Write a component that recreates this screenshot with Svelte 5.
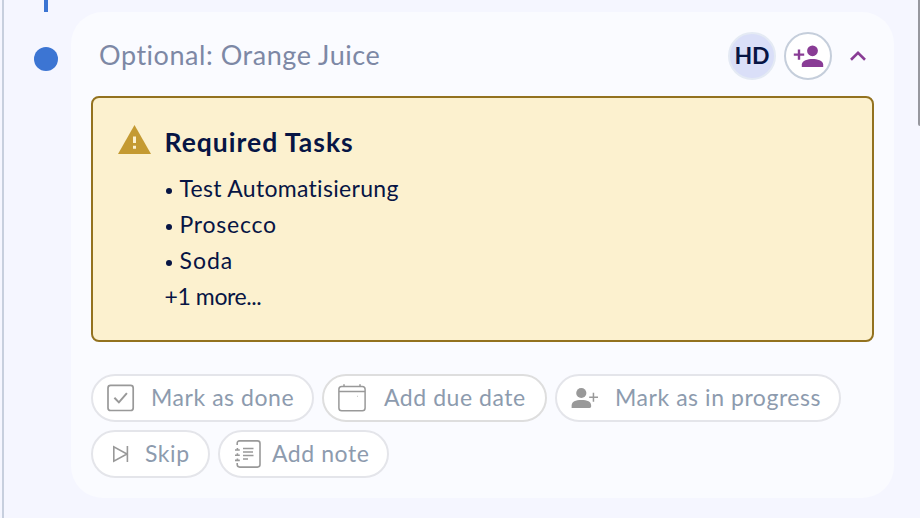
<script>
  const tasks = [
    { label: 'Test Automatisierung', cls: 'task-a' },
    { label: 'Prosecco', cls: 'task-b' },
    { label: 'Soda', cls: 'task-c' }
  ];
</script>

<main class="page">
  <div class="edge"></div>
  <aside class="timeline">
    <div class="stem"></div>
    <div class="dot"></div>
  </aside>

  <section class="card">
    <header class="head">
      <h2><span class="title">Optional: Orange Juice</span></h2>
      <div class="avatar"><span>HD</span></div>
      <button class="assign" aria-label="Assign">
        <svg width="44" height="44" viewBox="0 0 44 44" fill="#893c95">
          <circle cx="26.5" cy="16.8" r="5.4" />
          <path d="M15.8 33v-2.500c0-3.600 6.200-5.400 10.700-5.400s10.700 1.800 10.700 5.400V33z" />
          <path d="M11.800 15.400h2.400v4h4v2.400h-4v4h-2.400v-4h-4v-2.400h4z" />
        </svg>
      </button>
      <button class="toggle" aria-label="Collapse">
        <svg width="16" height="10" viewBox="0 0 16 10" fill="none" stroke="#893c95" stroke-width="2.600">
          <path d="M1 8.800l7-6.900 7 6.900" />
        </svg>
      </button>
    </header>

    <div class="alert">
      <svg class="warn" width="33" height="29" viewBox="0 0 33 29">
        <path d="M16.500 0L33 29H0z" fill="#c49a32" />
        <path d="M15 11.600h3v6.400h-3zM15 20.800h3v3h-3z" fill="#fcf1cf" />
      </svg>
      <div class="alert-body">
        <h3><span class="required">Required Tasks</span></h3>
        <ul>
          {#each tasks as task}
            <li><i class="bullet"></i><span class={task.cls}>{task.label}</span></li>
          {/each}
          <li><span class="more">+1 more...</span></li>
        </ul>
      </div>
    </div>

    <div class="actions">
      <button class="pill done">
        <svg width="28" height="28" viewBox="0 0 28 28" fill="none" stroke="#999" stroke-width="1.700">
          <rect x="1" y="1.300" width="25.200" height="25.200" rx="2.600" />
          <path d="M7.400 13.800l4.500 4.600 8-9.200" stroke-width="2" />
        </svg>
        <span>Mark as done</span>
      </button>
      <button class="pill due">
        <svg width="28" height="28" viewBox="0 0 28 28" fill="none" stroke="#999" stroke-width="1.500">
          <rect x="0.900" y="2.400" width="26.200" height="24.400" rx="2.800" />
          <path d="M1 7.600h26M6 .2v2.200M22 .2v2.200" />
          <path d="M19 12.300h1" stroke-width="1" opacity=".6" />
        </svg>
        <span>Add due date</span>
      </button>
      <button class="pill progress">
        <svg width="28" height="28" viewBox="0 0 28 28" fill="#999">
          <circle cx="10.300" cy="9" r="5.100" />
          <path d="M.6 24v-2c0-4.600 4-6 9.800-6s9.800 1.400 9.800 6c0 1.300-.6 2-1.700 2z" />
          <path d="M21.700 8.800h1.500v3.700H27V14h-3.800v3.700h-1.500V14h-3.500v-1.500h3.500z" />
        </svg>
        <span>Mark as in progress</span>
      </button>
      <button class="pill skip">
        <svg width="28" height="28" viewBox="0 0 28 28" fill="none" stroke="#999" stroke-width="1.600">
          <path d="M6.800 6.800v14.400l13.200-7.200zM20.400 6v16" />
        </svg>
        <span>Skip</span>
      </button>
      <button class="pill note">
        <svg width="28" height="28" viewBox="0 0 28 28" fill="none" stroke="#999" stroke-width="1.600">
          <path d="M3.200 5V3.400C3.200 1.700 4 .9 5.700.9h17.800c1.700 0 2.500.8 2.500 2.500v21.200c0 1.700-.8 2.500-2.500 2.500H5.700c-1.700 0-2.500-.8-2.500-2.500V23" />
          <path d="M1 10h4.800M1 15.200h4.800M1 20.400h4.800M3.400 8v2M3.400 13.200v2M3.400 18.400v2" />
          <path d="M9 8.500h10.500M9 12h10M9 15.500h10.500M9 19h5" />
        </svg>
        <span>Add note</span>
      </button>
    </div>
  </section>

  <div class="scroll"></div>
</main>

<style>
  :global(body) { margin: 0; background: #f5f6ff; }
  .page {
    display: flex;
    box-sizing: border-box;
    width: 920px;
    height: 518px;
    padding-left: 2px;
    overflow: hidden;
    background: #f5f6ff;
    font-family: Lato, "Liberation Sans", sans-serif;
    font-variant-ligatures: none;
    color: #071544;
  }
  button { font-family: inherit; margin: 0; padding: 0; background: none; border: 0; }
  h2, h3, ul { margin: 0; padding: 0; font-weight: 400; list-style: none; }
  svg { display: block; flex: none; }
  span { white-space: nowrap; }

  .edge { width: 2px; background: #c7cfde; }
  .timeline { display: flex; flex-direction: column; align-items: center; width: 67px; }
  .stem { width: 4px; height: 12px; margin-left: 17px; background: #3c75d3; }
  .dot { width: 24px; height: 24px; margin: 35px 0 0 17px; border-radius: 50%; background: #3c75d3; }

  .card {
    box-sizing: border-box;
    width: 823px;
    height: 486px;
    margin-top: 12px;
    padding: 20px;
    border-radius: 32px;
    background: #fafbff;
  }
  .head { display: flex; align-items: center; height: 48px; padding: 0 8px; }
  h2 { flex: 1; font-size: 27px; line-height: 46px; height: 48px; letter-spacing: 0.54px; color: #7d88a5; }
  .avatar, .assign {
    display: flex;
    align-items: center;
    justify-content: center;
    box-sizing: border-box;
    width: 48px;
    height: 48px;
    margin-right: 8px;
    border: 2px solid #e4eaf4;
    border-radius: 50%;
    background: #dadff8;
    font-size: 23px;
    font-weight: 700;
  }
  .avatar span { padding-bottom: 2px; }
  .assign { border-color: #c5cedb; background: #fff; }
  .toggle { margin-left: 10px; }

  .alert {
    display: flex;
    box-sizing: border-box;
    height: 246px;
    margin-top: 16px;
    padding: 26px 25px;
    border: 2px solid #93721f;
    border-radius: 8px;
    background: #fcf1cf;
  }
  .warn { margin-top: 1px; }
  .alert-body { margin-left: 13.500px; }
  h3 { font-size: 26.500px; line-height: 36px; font-weight: 700; letter-spacing: 1px; }
  ul { margin-top: 11px; font-size: 23px; }
  li { display: flex; align-items: center; height: 36px; }
  li span { padding-bottom: 2px; }
  .task-a { letter-spacing: 0.300px; }
  .task-b { letter-spacing: 0.750px; }
  .task-c { letter-spacing: 1px; }
  .more { letter-spacing: -0.400px; }
  .bullet { width: 6px; height: 6px; margin: 3px 8px 0 1px; border-radius: 50%; background: #071544; }

  .actions { display: flex; flex-wrap: wrap; gap: 8px; margin-top: 32px; }
  .pill {
    display: flex;
    align-items: center;
    box-sizing: border-box;
    height: 48px;
    padding-left: 14px;
    border: 2px solid #e4e5ea;
    border-radius: 24px;
    background: #fff;
    color: #8d9bae;
    font-size: 23px;
    letter-spacing: 0.550px;
  }
  .pill span { margin-left: 16px; padding-bottom: 2px; }
  .done { width: 223px; }
  .due { width: 225px; border-color: #dedede; }
  .progress { width: 286px; }
  .skip { width: 119px; }
  .note { width: 171px; }
  .pill.due span { margin-left: 18px; }
  .pill.skip span { margin-left: 10px; }
  .pill.note span { margin-left: 10px; }

  .scroll { width: 2px; height: 126px; margin-left: 24px; border-radius: 0 0 0 2px; background: #96979f; }
</style>
